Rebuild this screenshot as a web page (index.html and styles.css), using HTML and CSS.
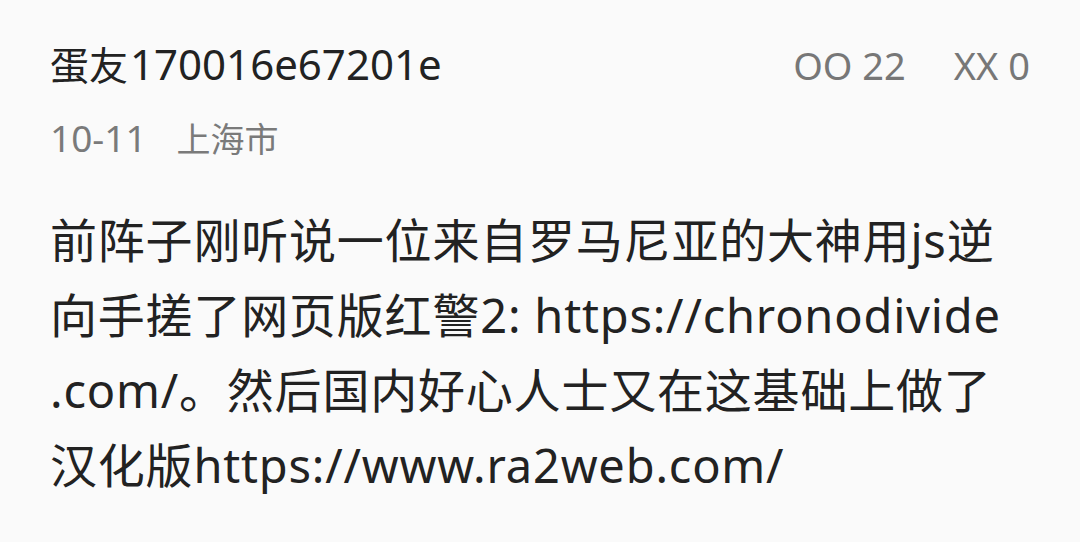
FILE: index.html
```html
<!DOCTYPE html>
<html lang="zh-CN">
<head>
<meta charset="utf-8">
<link rel="stylesheet" href="styles.css">
</head>
<body>
<div class="post">
  <div class="head">
    <div class="user"><span class="user-cjk">蛋友</span><span class="user-id">170016e67201e</span></div>
    <div class="votes">
      <span class="vote">OO 22</span>
      <span class="vote">XX 0</span>
    </div>
  </div>
  <div class="meta"><span class="date">10-11</span><span class="place">上海市</span></div>
  <div class="content">前阵子刚听说一位来自罗马尼亚的大神用js逆<br>向手搓了网页版红警2: https://chronodivide<br>.com/。然后国内好心人士又在这基础上做了<br>汉化版https://www.ra2web.com/</div>
</div>
</body>
</html>
```

FILE: styles.css
```css
html, body {
  margin: 0;
  padding: 0;
  background: #fafafa;
}
body {
  font-family: "Noto Sans", "Noto Sans CJK SC", sans-serif;
  color: #222222;
  width: 1080px;
  height: 542px;
  overflow: hidden;
}
.post {
  padding: 34px 50px 0 50px;
}
.head {
  display: flex;
  justify-content: space-between;
  align-items: baseline;
  height: 60px;
  line-height: 60px;
}
.user {
  color: #222222;
}
.user-cjk {
  font-size: 39px;
}
.user-id {
  font-size: 42px;
  margin-left: 2px;
}
.votes {
  display: flex;
  gap: 48px;
  font-size: 38px;
  color: #777777;
}
.meta {
  margin-top: 16px;
  line-height: 56px;
  color: #7a7a7a;
  display: flex;
  align-items: baseline;
  gap: 30px;
}
.date {
  font-size: 37px;
}
.place {
  font-size: 34px;
}
.content {
  margin-top: 36px;
  font-size: 47px;
  line-height: 75px;
  letter-spacing: 0.8px;
  color: #222222;
  white-space: nowrap;
}
```
